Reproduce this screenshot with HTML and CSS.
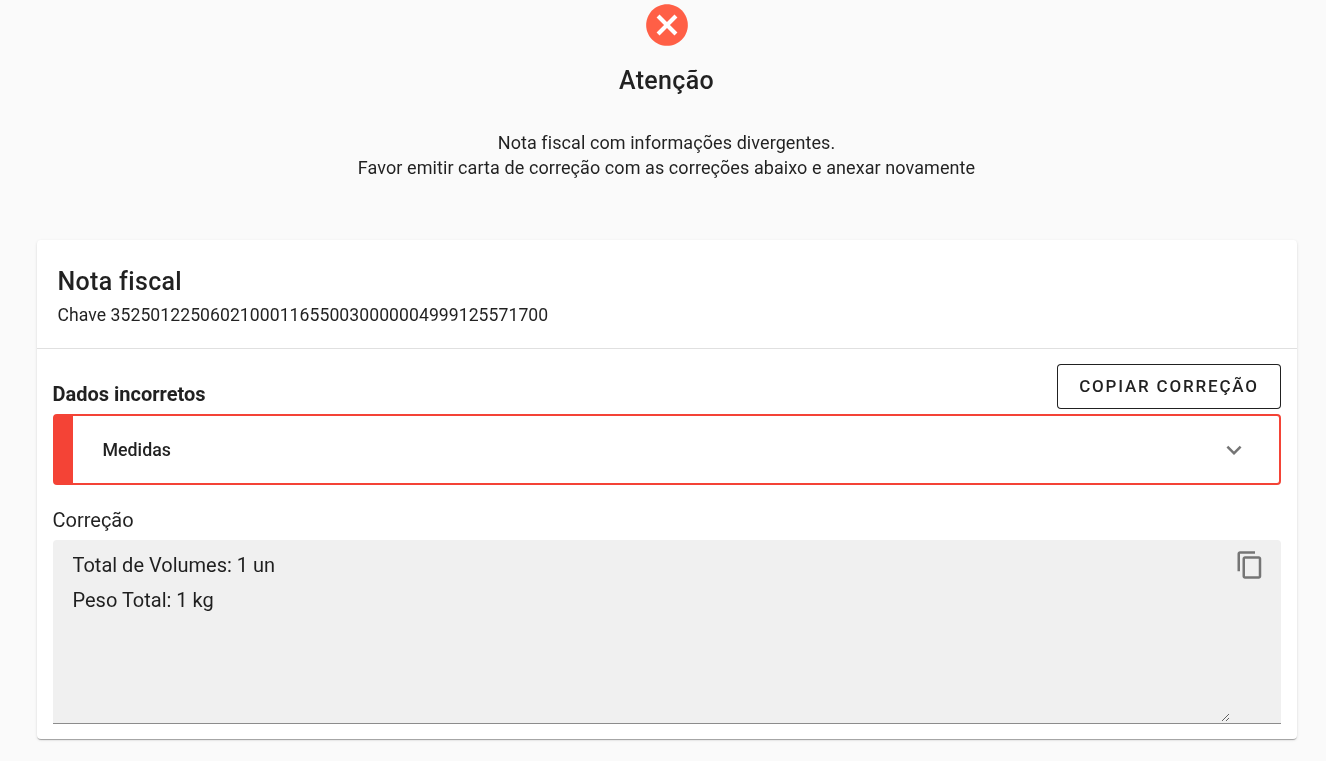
FILE: index.html
```html
<!DOCTYPE html>
<html lang="pt-BR">
<head>
<meta charset="utf-8">
<title>Atenção</title>
<link rel="stylesheet" href="styles.css">
</head>
<body>
<main class="page">
  <header class="alert">
    <svg class="alert-icon" viewBox="0 0 24 24" width="50" height="50"><path fill="#ff5f46" d="M12 2C6.47 2 2 6.47 2 12s4.47 10 10 10 10-4.47 10-10S17.53 2 12 2z"/><path fill="#fff" d="M17 15.59 15.59 17 12 13.41 8.41 17 7 15.59 10.59 12 7 8.41 8.41 7 12 10.59 15.59 7 17 8.41 13.41 12z"/></svg>
    <h1 class="alert-title">Atenção</h1>
    <p class="alert-text">Nota fiscal com informações divergentes.<br>Favor emitir carta de correção com as correções abaixo e anexar novamente</p>
  </header>
  <section class="card">
    <div class="card-head">
      <h2 class="card-title">Nota fiscal</h2>
      <p class="card-key">Chave 35250122506021000116550030000004999125571700</p>
    </div>
    <div class="card-body">
      <div class="toolbar">
        <h3 class="section-title">Dados incorretos</h3>
        <button class="copy-btn" type="button">COPIAR CORREÇÃO</button>
      </div>
      <div class="panel">
        <span class="panel-label">Medidas</span>
        <svg class="chevron" viewBox="0 0 24 24" width="30" height="30"><path fill="#757575" d="M7.41 8.59 12 13.17l4.59-4.58L18 10l-6 6-6-6z"/></svg>
      </div>
      <div class="field-label">Correção</div>
      <div class="field">
        <textarea class="field-input" readonly>Total de Volumes: 1 un
Peso Total: 1 kg</textarea>
        <svg class="copy-icon" viewBox="0 0 24 24" width="30" height="30"><path fill="#757575" d="M16 1H4c-1.100 0-2 .9-2 2v14h2V3h12V1zm3 4H8c-1.100 0-2 .9-2 2v14c0 1.100.9 2 2 2h11c1.100 0 2-.9 2-2V7c0-1.100-.9-2-2-2zm0 16H8V7h11v14z"/></svg>
      </div>
    </div>
  </section>
</main>
</body>
</html>
```
FILE: styles.css
```css
* { box-sizing: border-box; }
html, body { margin: 0; height: 100%; overflow: hidden; }
body {
  background: #fafafa;
  color: rgba(0, 0, 0, .87);
  font-family: Roboto, "Liberation Sans", sans-serif;
}
.page { padding: 0 29px 0 37px; will-change: transform; }
.alert { display: flex; flex-direction: column; align-items: center; height: 240px; padding-right: 1px; }
.alert-icon { display: block; flex: none; }
.alert-title {
  margin: 15px 0 0;
  font-size: 25px;
  line-height: 32px;
  font-weight: 500;
  letter-spacing: .33px;
}
.alert-text {
  margin: 33px 0 0;
  font-size: 18px;
  line-height: 25px;
  text-align: center;
  letter-spacing: .08px;
}
.card {
  background: #fff;
  border-radius: 4px;
  height: 499px;
  box-shadow: 0 2px 1px -1px rgba(0,0,0,.2), 0 1px 1px 0 rgba(0,0,0,.14), 0 1px 3px 0 rgba(0,0,0,.12);
}
.card-head { height: 109px; padding: 26px 20.500px 0; border-bottom: 1px solid #e0e0e0; }
.card-title { margin: 0; font-size: 25px; line-height: 32px; font-weight: 500; letter-spacing: .33px; }
.card-key { margin: 5px 0 0; font-size: 17.600px; line-height: 24px; letter-spacing: .06px; }
.card-body { padding: 15px 16px 0; }
.toolbar { display: flex; justify-content: space-between; align-items: flex-end; height: 45px; }
.section-title { margin: 0 0 2px -.5px; font-size: 20px; line-height: 26px; font-weight: 700; letter-spacing: 0; }
.copy-btn {
  width: 224px;
  height: 45px;
  background: #fff;
  border: 1px solid rgba(0, 0, 0, .87);
  border-radius: 4px;
  color: rgba(0, 0, 0, .87);
  font: 500 17px Roboto, sans-serif;
  letter-spacing: 1.800px;
  padding: 0 0 1px;
}
.panel {
  display: flex;
  align-items: center;
  justify-content: space-between;
  margin-top: 5px;
  height: 71px;
  background: #fff;
  border: 2px solid #f44336;
  border-left-width: 20px;
  border-radius: 4px;
  padding: 0 30.500px 0 29.500px;
}
.panel-label { font-size: 17.800px; font-weight: 500; }
.chevron { display: block; }
.field-label { margin: 23px 0 0 -.5px; font-size: 20px; line-height: 24px; }
.field {
  position: relative;
  display: flex;
  margin-top: 8px;
  height: 184px;
  background: #f0f0f0;
  border-bottom: 1px solid #8c8c8c;
  border-radius: 4px 4px 0 0;
  padding-right: 51px;
}
.field-input {
  flex: 1;
  height: 182px;
  display: block;
  border: 0;
  outline: 0;
  background: transparent;
  color: rgba(0, 0, 0, .87);
  font: 400 20px/35px Roboto, sans-serif;
  padding: 8px 0 0 19.500px;
  resize: vertical;
}
.copy-icon { position: absolute; top: 10px; right: 16px; display: block; }
```
